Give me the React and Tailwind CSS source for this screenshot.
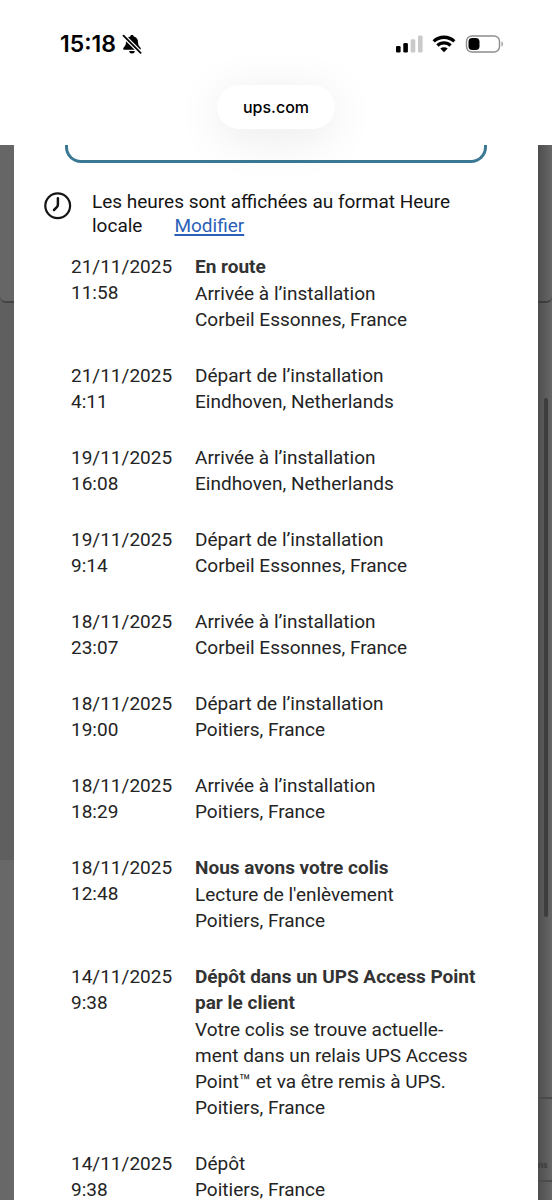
const events = [
  { date: '21/11/2025', time: '11:58', title: 'En route', lines: ['Arrivée à l’installation', 'Corbeil Essonnes, France'] },
  { date: '21/11/2025', time: '4:11', lines: ['Départ de l’installation', 'Eindhoven, Netherlands'] },
  { date: '19/11/2025', time: '16:08', lines: ['Arrivée à l’installation', 'Eindhoven, Netherlands'] },
  { date: '19/11/2025', time: '9:14', lines: ['Départ de l’installation', 'Corbeil Essonnes, France'] },
  { date: '18/11/2025', time: '23:07', lines: ['Arrivée à l’installation', 'Corbeil Essonnes, France'] },
  { date: '18/11/2025', time: '19:00', lines: ['Départ de l’installation', 'Poitiers, France'] },
  { date: '18/11/2025', time: '18:29', lines: ['Arrivée à l’installation', 'Poitiers, France'] },
  { date: '18/11/2025', time: '12:48', title: 'Nous avons votre colis', lines: ["Lecture de l'enlèvement", 'Poitiers, France'] },
  {
    date: '14/11/2025',
    time: '9:38',
    title: 'Dépôt dans un UPS Access Point par le client',
    lines: ['Votre colis se trouve actuelle\u00adment dans un relais UPS Access Point™ et va être remis à UPS.', 'Poitiers, France'],
  },
  { date: '14/11/2025', time: '9:38', lines: ['Dépôt', 'Poitiers, France'] },
];

export default function App() {
  return (
    <div className="flex h-screen flex-col overflow-hidden bg-[#636363] font-[Roboto,sans-serif] text-[#242424]">
      <Header />

      <div className="flex min-h-0 flex-1">
        {/* Dimmed page, left of the dialog */}
        <div className="flex w-3.5 shrink-0 flex-col bg-[#686868]">
          <div className="bg-[#5f5f5f]">
            <div className="h-[158px] rounded-bl-md border-b-2 border-[#444444] bg-[#666666]"></div>
          </div>
          <div className="h-[557px] bg-[#5f5f5f]"></div>
        </div>

        <main className="min-w-0 flex-1 bg-white">
          <div className="mx-[51px] h-[18px] rounded-b-2xl border-x-3 border-b-3 border-[#3a7896]"></div>

          <div className="mt-[27px] ml-[30px] flex items-start">
            <ClockIcon />
            <p className="ml-5 max-w-[380px] text-[19px] leading-6 text-[#141414]">
              Les heures sont affichées au format Heure locale
              <a href="#" className="ml-8 text-[#2b5fb8] underline decoration-2 underline-offset-2">Modifier</a>
            </p>
          </div>

          <table className="mt-4 ml-[57px] text-left text-[19px] leading-[26px]">
            <tbody>
              {events.map((event, i) => (
                <EventRow key={i} {...event} />
              ))}
            </tbody>
          </table>
        </main>

        {/* Dimmed page, right of the dialog */}
        <div className="relative flex w-3.5 shrink-0 flex-col overflow-hidden bg-linear-to-r from-[#4e4e4e] to-[#676767]">
          <div className="h-[158px] rounded-br-md border-b-2 border-[#3c3c3c]"></div>
          <div className="h-[794px]"></div>
          <div className="flex h-[85px] items-end justify-start border-y-2 border-[#4b4b4b] pb-2 text-[9px] font-bold text-[#3c3c3c]">ns</div>
          <div className="absolute top-[253px] right-1 h-[519px] w-1 rounded-full bg-[#3d3d3d]"></div>
        </div>
      </div>
    </div>
  );
}

function Header() {
  return (
    <header className="relative z-10 h-[145px] shrink-0 bg-white font-[Inter,sans-serif] text-black">
      <div className="flex items-center justify-between pt-7 pr-12 pl-[60px]">
        <div className="flex h-8 items-center gap-1.5 text-[23px] font-semibold">
          <span>15:18</span>
          <BellOffIcon />
        </div>
        <div className="flex h-8 items-center">
          <SignalIcon />
          <WifiIcon />
          <BatteryIcon />
        </div>
      </div>
      <div className="mt-[25px] flex justify-center">
        <div className="flex h-11 items-center rounded-full bg-white px-[26px] text-[16px] font-medium shadow-[0_8px_48px_rgba(0,0,0,0.09)]">
          ups.com
        </div>
      </div>
    </header>
  );
}

function EventRow({ date, time, title, lines }) {
  return (
    <tr className="align-top">
      <td className="w-[124px] pb-[30px]">
        <div>{date}</div>
        <div>{time}</div>
      </td>
      <td className="max-w-[284px] pb-[30px]">
        {title && <h3 className="mb-px font-bold text-[#333333]">{title}</h3>}
        {lines.map((line) => (
          <p key={line}>{line}</p>
        ))}
      </td>
    </tr>
  );
}

function ClockIcon() {
  return (
    <svg className="mt-0.5 h-7 w-7 shrink-0" viewBox="0 0 28 28" fill="none" stroke="#141414">
      <circle cx="13.7" cy="13.7" r="12.4" strokeWidth="2.2" />
      <path d="M13.900 6.200V12.500Q13.900 14 12.800 15.200L10 18" strokeWidth="2.5" strokeLinecap="round" strokeLinejoin="round" />
    </svg>
  );
}

function BellOffIcon() {
  return (
    <svg className="h-5 w-5" viewBox="0 0 20 20" fill="none">
      <path d="M10 .9c-1 0-1.800.7-1.800 1.600C5.500 3.300 4 5.200 4 7.800c0 3-.8 4.200-2.300 5.700-.8.8-.8 2.300.5 2.300h15.600c1.300 0 1.300-1.500.5-2.300-1.500-1.500-2.300-2.700-2.300-5.700 0-2.600-1.500-4.500-4.200-5.300C11.800 1.600 11 .9 10 .9Z" fill="#000" />
      <path d="M7.300 17h5.400a2.700 2.500 0 0 1-5.400 0Z" fill="#000" />
      <path d="M1.200 1.400 18.800 19" stroke="#fff" strokeWidth="4.200" />
      <path d="M1.500 1.700 18.600 18.800" stroke="#000" strokeWidth="1.800" strokeLinecap="round" />
    </svg>
  );
}

function SignalIcon() {
  return (
    <svg className="h-[18px] w-7" viewBox="0 0 28 18">
      <rect x="0" y="11" width="4.600" height="6.500" rx="1.300" fill="#000" />
      <rect x="7.300" y="8" width="4.600" height="9.500" rx="1.300" fill="#000" />
      <rect x="14.700" y="4.300" width="4.600" height="13.200" rx="1.300" fill="#c9c9c9" />
      <rect x="22" y="0.500" width="4.600" height="17" rx="1.300" fill="#c9c9c9" />
    </svg>
  );
}

function WifiIcon() {
  return (
    <svg className="ml-2 h-[18px] w-6" viewBox="0 0 24 18" fill="none" stroke="#000">
      <path d="M1.700 6.400a14.800 14.800 0 0 1 20.600 0" strokeWidth="3.300" />
      <path d="M5.400 10.500a9.500 9.500 0 0 1 13.200 0" strokeWidth="3.200" />
      <path d="M12 17.300 8.300 13.600a5.400 5.400 0 0 1 7.400 0Z" fill="#000" stroke="none" />
    </svg>
  );
}

function BatteryIcon() {
  return (
    <svg className="ml-[9px] h-[18px] w-[39px]" viewBox="0 0 39 18" fill="none">
      <rect x="1.500" y="1" width="33" height="16" rx="5.500" stroke="#8c8c8c" strokeWidth="1.400" />
      <rect x="3.500" y="3" width="11" height="12" rx="3.800" fill="#000" />
      <path d="M36.500 6.500c1.800.6 1.800 4.400 0 5Z" fill="#8c8c8c" />
    </svg>
  );
}
